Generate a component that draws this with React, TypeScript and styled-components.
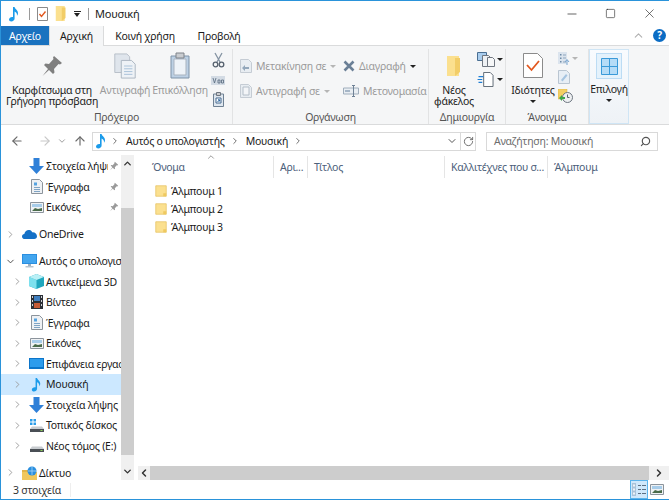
import React from 'react'
import styled, { createGlobalStyle } from 'styled-components'
import { ArrowLeft, ArrowRight, ArrowUp, ChevronDown, ChevronLeft, ChevronRight, ChevronUp, RotateCw, Search, Minus, Square, X } from 'lucide-react'

const GlobalStyle = createGlobalStyle`
    html, body {
        margin: 0;
        padding: 0;
        background: #ffffff;
    }
    * {
        box-sizing: border-box;
    }
`

const NoteIcon = ({ size = 16 }: { size?: number }) => (
    <svg width={size} height={size} viewBox="0 0 16 16">
        <path d="M7 1h1.6c.3 2.2 3.6 3 3.4 6.4-.1 1-.5 1.800-1 2.400.2-2-.8-3.600-2.400-4.200V12.600c0 1.700-1.600 2.900-3.300 2.900-1.300 0-2.300-.7-2.300-1.900 0-1.500 1.500-2.700 3.100-2.700.3 0 .6 0 .9.100z" fill="#1b9bea" />
    </svg>
)

const FolderIcon = ({ size = 12, tall = false }: { size?: number; tall?: boolean }) => (
    <svg width={size} height={tall ? size * 1.25 : size} viewBox={tall ? '0 0 16 20' : '0 0 16 16'}>
        {tall ? (
            <>
                <path d="M1 0h12v20H1z" fill="#fbe08f" />
                <path d="M9 2h5v14l-5 4z" fill="#f2cd68" />
            </>
        ) : (
            <>
                <path d="M1 1h14v14H1z" fill="#fbe08f" />
                <path d="M1 1h14v14H1z" fill="none" stroke="#e6c263" />
                <path d="M11 11h4v4h-4z" fill="#efc95f" />
            </>
        )}
    </svg>
)

const ChecklistIcon = () => (
    <svg width="11" height="14" viewBox="0 0 11 14">
        <path d="M.5.500h10v13H.5z" fill="#fff" stroke="#8a8a8a" />
        <path d="M2.500 7l2 2.500 4-5" fill="none" stroke="#e2571e" strokeWidth="1.400" />
    </svg>
)

const PinIcon = ({ size = 24, color = '#7f7f7f' }: { size?: number; color?: string }) => (
    <svg width={size} height={size} viewBox="0 0 24 24">
        <path d="M14 2l8 7-2 1.500-1.500-.5-4.500 5 .5 3.500-1.500 1.500-4-4-6.500 6 5.500-7-4-4 1.500-1.500 3.500.5 4.500-5-.5-1.500z" fill={color} />
    </svg>
)

const CopyIcon = () => (
    <svg width="24" height="26" viewBox="0 0 24 28">
        <path d="M1 1h13l3 3v17H1z" fill="#dfe5ec" stroke="#b5bdc7" />
        <path d="M8 8h11l4 4v15H8z" fill="#eef2f6" stroke="#a9b3bf" />
        <path d="M11 14h9M11 17h9M11 20h9M11 23h9" stroke="#a6c0d8" />
    </svg>
)

const PasteIcon = () => (
    <svg width="20" height="27" viewBox="0 0 20 27">
        <path d="M1 4h18v22H1z" fill="#bcd0e4" stroke="#7f93a8" />
        <path d="M4 7h12v16H4z" fill="#eef3f8" stroke="#a9b3bf" />
        <path d="M6 1h8v5H6z" fill="#c9ccd0" stroke="#7f8389" />
    </svg>
)

const ScissorsIcon = () => (
    <svg width="13" height="16" viewBox="0 0 13 16">
        <path d="M3 1l5 9M10 1l-5 9" stroke="#8493a3" strokeWidth="1.300" fill="none" />
        <circle cx="3.500" cy="12.500" r="2.300" fill="none" stroke="#56616e" strokeWidth="1.300" />
        <circle cx="9.500" cy="12.500" r="2.300" fill="none" stroke="#56616e" strokeWidth="1.300" />
    </svg>
)

const PathIcon = () => (
    <svg width="14" height="9" viewBox="0 0 14 9">
        <path d="M0 0h14v9H0z" fill="#d3dbe4" />
        <path d="M2 2l1.500 5L5 2M7 4h2v3H7zM10.500 4h2v3h-2z" fill="none" stroke="#55687c" strokeWidth=".8" />
    </svg>
)

const ShortcutIcon = () => (
    <svg width="11" height="15" viewBox="0 0 11 15">
        <path d="M.5 2h10v12.500H.5z" fill="#dfe7ef" stroke="#6f8193" />
        <path d="M3.500 .5h4v3h-4z" fill="#c9ccd0" stroke="#6f7680" />
        <path d="M3 6h5v5H3z" fill="#fff" stroke="#44698f" />
        <path d="M4.500 10l2-2M5 7.800h1.700v1.700" stroke="#1f5d99" fill="none" />
    </svg>
)

const MoveIcon = ({ copy = false }: { copy?: boolean }) => (
    <svg width="12" height="14" viewBox="0 0 12 14">
        <path d="M.5.500h8l3 3v10H.5z" fill="#e8edf2" stroke="#c5ccd4" />
        {copy ? (
            <path d="M3 3h6v8H3z" fill="#f3f5f8" stroke="#b4bec8" />
        ) : (
            <path d="M9 8H5V6L2 9l3 3v-2h4z" fill="#93a7bb" />
        )}
    </svg>
)

const DeleteIcon = () => (
    <svg width="12" height="12" viewBox="0 0 12 12">
        <path d="M1.500 1.500l9 9M10.500 1.500l-9 9" stroke="#6a7f96" strokeWidth="2.600" />
    </svg>
)

const RenameIcon = () => (
    <svg width="16" height="12" viewBox="0 0 16 12">
        <path d="M.5 3h15v6H.5z" fill="#e9eef3" stroke="#a0aebc" />
        <path d="M9 .5h3M10.500 .5v11M9 11.500h3" stroke="#6f8296" fill="none" />
        <path d="M2 6h5" stroke="#8fa3b8" strokeWidth="1.500" />
    </svg>
)

const MoveToNewIcon = () => (
    <svg width="18" height="15" viewBox="0 0 18 15">
        <path d="M.5.500h9v8h-9z" fill="#a9cdee" stroke="#4a6f93" />
        <path d="M5.500 3.500h6l2 2v9h-8z" fill="#eef1f4" stroke="#6f7680" />
        <path d="M10.500 5.500h5l2 2v7h-7z" fill="#f6f7f8" stroke="#6f7680" />
    </svg>
)

const NewDocIcon = () => (
    <svg width="18" height="15" viewBox="0 0 18 16">
        <path d="M6.500.5h7l3 3v12h-10z" fill="#fff" stroke="#5a6470" />
        <path d="M1 5h5M0 8h5M1 11h4" stroke="#1f7fd6" strokeWidth="1.300" />
    </svg>
)

const PropertiesIcon = () => (
    <svg width="20" height="25" viewBox="0 0 20 25">
        <path d="M.5.500h14l5 5v19H.5z" fill="#fff" stroke="#8b8b8b" />
        <path d="M4 12l4.500 5L16 8" fill="none" stroke="#e2571e" strokeWidth="1.800" />
    </svg>
)

const ListUpIcon = () => (
    <svg width="12" height="13" viewBox="0 0 12 13">
        <path d="M0 0h9v12H0z" fill="#dbe4ee" />
        <path d="M2 2h1.500v1.500H2zM2 5.500h1.500V7H2zM2 9h1.500v1.500H2z" fill="#6f8ba8" />
        <path d="M5 3h3M5 6h3M5 10h3" stroke="#8ea5bc" />
        <path d="M9 13V8M7 10l2-2.500L11 10" stroke="#7aa6d0" fill="none" />
    </svg>
)

const EditDocIcon = () => (
    <svg width="12" height="14" viewBox="0 0 12 14">
        <path d="M.5.500h8l3 3v10H.5z" fill="#e7eef5" stroke="#b9c5d1" />
        <path d="M3 10l5-6 1.500 1.500-5 6z" fill="#a5c4e0" />
    </svg>
)

const HistoryIcon = () => (
    <svg width="15" height="14" viewBox="0 0 15 14">
        <path d="M0 0h9v10H0z" fill="#f3cf63" stroke="#d5ad45" strokeWidth=".5" />
        <circle cx="9.500" cy="8.500" r="5" fill="#eef0f2" stroke="#6d7680" />
        <path d="M9.500 5.500v3h2" stroke="#59636d" fill="none" />
        <path d="M1 9l3-3v2h3v2H4v2z" fill="#3ea84a" />
    </svg>
)

const SelectIcon = () => (
    <svg width="17" height="17" viewBox="0 0 17 17">
        <path d="M.5.500h16v16H.5z" fill="#b5dcf7" stroke="#3a9ad9" />
        <path d="M8.500 .5v16M.5 8.500h16" stroke="#3a9ad9" />
    </svg>
)

const DownloadIcon = () => (
    <svg width="15" height="16" viewBox="0 0 15 16">
        <path d="M4.500 0h6v8h4.500l-7.500 8L0 8h4.500z" fill="#2f80d8" />
    </svg>
)

const DocIcon = () => (
    <svg width="12" height="15" viewBox="0 0 12 15">
        <path d="M.5.500h8l3 3v11H.5z" fill="#eef1f4" stroke="#8c949c" />
        <path d="M3 3.500h3v3H3z" fill="#55a3e0" />
        <path d="M3 8.500h6M3 10.500h6M3 12.500h6" stroke="#7fa4c4" />
    </svg>
)

const PictureIcon = () => (
    <svg width="14" height="11" viewBox="0 0 14 11">
        <path d="M.5.500h13v10H.5z" fill="#f0f2f4" stroke="#8c949c" />
        <path d="M2 2h10v3H2z" fill="#a8cdea" />
        <path d="M2 9l3-3 3 1 4-1v3z" fill="#4a6b4a" />
    </svg>
)

const CloudIcon = () => (
    <svg width="15" height="10" viewBox="0 0 15 10">
        <path d="M3 10C1 10 0 8.800 0 7.400 0 6 1 5 2.300 4.900 3 2 5.300.5 7.500 1c1.300.3 2.300 1.100 2.700 2.300 2.500-.4 4.800 1.400 4.800 3.900 0 1.700-1.200 2.800-2.800 2.800z" fill="#1571c7" />
    </svg>
)

const ComputerIcon = () => (
    <svg width="15" height="14" viewBox="0 0 15 14">
        <path d="M0 0h15v10H0z" fill="#2b8fe0" />
        <path d="M1 1h13v8H1z" fill="#43a6ef" />
        <path d="M6 10h3v2H6z" fill="#9fb0bf" />
        <path d="M3.500 12h8v1.500h-8z" fill="#b8c4ce" />
    </svg>
)

const CubeIcon = () => (
    <svg width="15" height="15" viewBox="0 0 15 15">
        <path d="M7.500 0L15 3v9l-7.500 3L0 12V3z" fill="#1ea6bd" />
        <path d="M0 3l7.500 3v9L0 12z" fill="#7ce0ee" />
        <path d="M7.500 0L15 3 7.500 6 0 3z" fill="#baf0f6" />
    </svg>
)

const FilmIcon = () => (
    <svg width="12" height="14" viewBox="0 0 12 14">
        <path d="M0 0h12v14H0z" fill="#2b2f36" />
        <path d="M3 1h6v5H3z" fill="#3f7fc0" />
        <path d="M3 8h6v5H3z" fill="#c45a35" />
        <path d="M1 1h1v2H1zM1 5h1v2H1zM1 9h1v2H1zM10 1h1v2h-1zM10 5h1v2h-1zM10 9h1v2h-1z" fill="#cfd3d8" />
    </svg>
)

const DesktopIcon = () => (
    <svg width="15" height="11" viewBox="0 0 15 11">
        <path d="M0 0h15v11H0z" fill="#0c75c9" />
        <path d="M1 1h13v8H1z" fill="#2d9cec" />
    </svg>
)

const DriveIcon = ({ windows = false }: { windows?: boolean }) => (
    <svg width="14" height="13" viewBox="0 0 14 13">
        {windows && <path d="M0 0h2.500v2.500H0zM3.500 0H6v2.500H3.500zM0 3.500h2.500V6H0zM3.500 3.500H6V6H3.500z" fill="#2a9ce8" />}
        <path d="M2 7.500h10l2 2.500H0z" fill="#c8ccd0" />
        <path d="M0 10h14v3H0z" fill="#4a4f55" />
        <path d="M10.500 11h2v1h-2z" fill="#8ed05a" />
    </svg>
)

const NetworkIcon = () => (
    <svg width="15" height="14" viewBox="0 0 15 14">
        <path d="M0 6h15v8H0z" fill="#f0c75c" />
        <path d="M0 4h6l1 2H0z" fill="#e2b448" />
        <circle cx="10" cy="5" r="4.500" fill="#2a8fdf" />
        <path d="M6 5h8M10 1v8" stroke="#a7d6f7" strokeWidth=".8" />
    </svg>
)

const DetailsViewIcon = () => (
    <svg width="14" height="13" viewBox="0 0 14 13">
        <path d="M0 0h4v13H0z" fill="#a9c2d8" />
        <path d="M1 1.500h2v2H1zM1 5.500h2v2H1zM1 9.500h2v2H1z" fill="#eef3f7" />
        <path d="M6 2.500h3M10 2.500h4M6 6.500h3M10 6.500h4M6 10.500h3M10 10.500h4" stroke="#5c6f82" />
    </svg>
)

function Caret() {
    return <CaretMark />
}

const rootTree = [
    { label: 'Στοιχεία λήψης', icon: <DownloadIcon />, pinned: true },
    { label: 'Έγγραφα', icon: <DocIcon />, pinned: true },
    { label: 'Εικόνες', icon: <PictureIcon />, pinned: true }
]

const computerTree = [
    { label: 'Αντικείμενα 3D', icon: <CubeIcon /> },
    { label: 'Βίντεο', icon: <FilmIcon /> },
    { label: 'Έγγραφα', icon: <DocIcon /> },
    { label: 'Εικόνες', icon: <PictureIcon /> },
    { label: 'Επιφάνεια εργασίας', icon: <DesktopIcon /> },
    { label: 'Μουσική', icon: <NoteIcon size={15} />, selected: true },
    { label: 'Στοιχεία λήψης', icon: <DownloadIcon /> },
    { label: 'Τοπικός δίσκος', icon: <DriveIcon windows /> },
    { label: 'Νέος τόμος (E:)', icon: <DriveIcon /> }
]

const columns = [
    { label: 'Όνομα', width: 136, pad: 14 },
    { label: 'Αρι...', width: 34, pad: 6 },
    { label: 'Τίτλος', width: 137, pad: 6 },
    { label: 'Καλλιτέχνες που σ...', width: 103, pad: 6 },
    { label: 'Άλμπουμ', width: 100, pad: 6 }
]

function App() {
    return (
        <Root>
            <GlobalStyle />
            <TitleBar>
                <TitleIcons>
                    <NoteIcon />
                    <TitleSep />
                    <ChecklistIcon />
                    <FolderIcon size={12} tall />
                    <QuickCaret />
                    <TitleSep />
                </TitleIcons>
                <TitleText>Μουσική</TitleText>
                <WindowButtons>
                    <WindowButton><Minus size={14} strokeWidth={1.2} /></WindowButton>
                    <WindowButton><Square size={11} strokeWidth={1.3} /></WindowButton>
                    <WindowButton><X size={15} strokeWidth={1} /></WindowButton>
                </WindowButtons>
            </TitleBar>

            <TabStrip>
                <FileTab>Αρχείο</FileTab>
                <ActiveTab>Αρχική</ActiveTab>
                <Tab width={82}>Κοινή χρήση</Tab>
                <Tab width={66}>Προβολή</Tab>
                <TabTools>
                    <ChevronUp size={13} color="#b0b0b0" />
                    <HelpBadge>?</HelpBadge>
                </TabTools>
            </TabStrip>

            <Ribbon>
                <Group width={232}>
                    <GroupBody>
                        <LargeButton width={98}>
                            <LargeIcon><PinIcon /></LargeIcon>
                            Καρφίτσωμα στη Γρήγορη πρόσβαση
                        </LargeButton>
                        <LargeButton width={48} disabled>
                            <LargeIcon><CopyIcon /></LargeIcon>
                            Αντιγραφή
                        </LargeButton>
                        <LargeButton width={62} disabled>
                            <LargeIcon><PasteIcon /></LargeIcon>
                            Επικόλληση
                        </LargeButton>
                        <IconColumn width={14} gap={7.5} centered>
                            <ScissorsIcon />
                            <PathIcon />
                            <ShortcutIcon />
                        </IconColumn>
                    </GroupBody>
                    <GroupLabel>Πρόχειρο</GroupLabel>
                </Group>
                <Group width={196}>
                    <GroupBody>
                        <SmallColumn width={103} inset={7}>
                            <SmallButton><MoveIcon /> Μετακίνηση σε <Caret /></SmallButton>
                            <SmallButton><MoveIcon copy /> Αντιγραφή σε <Caret /></SmallButton>
                        </SmallColumn>
                        <SmallColumn width={90} inset={7}>
                            <SmallButton><DeleteIcon /> Διαγραφή <DarkCaret /></SmallButton>
                            <SmallButton><RenameIcon /> Μετονομασία</SmallButton>
                        </SmallColumn>
                    </GroupBody>
                    <GroupLabel>Οργάνωση</GroupLabel>
                </Group>
                <Group width={77}>
                    <GroupBody>
                        <LargeButton width={46}>
                            <LargeIcon><FolderIcon size={16} tall /></LargeIcon>
                            Νέος φάκελος
                        </LargeButton>
                        <IconColumn width={26} gap={5}>
                            <IconWithCaret><MoveToNewIcon /><DarkCaret /></IconWithCaret>
                            <IconWithCaret><NewDocIcon /><DarkCaret /></IconWithCaret>
                        </IconColumn>
                    </GroupBody>
                    <GroupLabel>Δημιουργία</GroupLabel>
                </Group>
                <Group width={83}>
                    <GroupBody>
                        <LargeButton width={50}>
                            <LargeIcon><PropertiesIcon /></LargeIcon>
                            Ιδιότητες
                            <BlockCaret />
                        </LargeButton>
                        <IconColumn width={26} gap={5}>
                            <IconWithCaret><ListUpIcon /><Caret /></IconWithCaret>
                            <EditDocIcon />
                            <HistoryIcon />
                        </IconColumn>
                    </GroupBody>
                    <GroupLabel>Άνοιγμα</GroupLabel>
                </Group>
                <SelectGroup>
                    <SelectTile><SelectIcon /></SelectTile>
                    Επιλογή
                    <BlockCaret />
                </SelectGroup>
            </Ribbon>

            <NavBar>
                <NavArrows>
                    <NavSlot><ArrowLeft size={14} color="#6b6b6b" /></NavSlot>
                    <NavSlot lead={14}><ArrowRight size={14} color="#c8c8c8" /></NavSlot>
                    <NavSlot lead={5}><ChevronDown size={10} color="#8a8a8a" /></NavSlot>
                    <NavSlot lead={6}><ArrowUp size={14} color="#6b6b6b" /></NavSlot>
                </NavArrows>
                <AddressBox>
                    <NoteIcon />
                    <Crumb lead={1}><ChevronRight size={10} /></Crumb>
                    <CrumbText>Αυτός ο υπολογιστής</CrumbText>
                    <Crumb lead={5}><ChevronRight size={10} /></Crumb>
                    <CrumbText>Μουσική</CrumbText>
                    <Crumb lead={5}><ChevronRight size={10} /></Crumb>
                    <AddressTools>
                        <ChevronDown size={12} color="#555" />
                        <AddressDivider />
                        <RotateCw size={11} color="#666" />
                    </AddressTools>
                </AddressBox>
                <SearchBox>
                    Αναζήτηση: Μουσική
                    <SearchIconBox><Search size={11} color="#555" strokeWidth={2.5} /></SearchIconBox>
                </SearchBox>
            </NavBar>

            <Body>
                <Sidebar>
                    <TreeList>
                        {rootTree.map((item) => (
                            <TreeRow key={item.label} depth={2}>
                                <Expander />
                                <TreeIcon>{item.icon}</TreeIcon>
                                <TreeLabel>{item.label}</TreeLabel>
                                <PinSlot><PinIcon size={10} color="#9a9a9a" /></PinSlot>
                            </TreeRow>
                        ))}
                        <TreeRow depth={1} spaced>
                            <Expander><ChevronRight size={11} /></Expander>
                            <TreeIcon><CloudIcon /></TreeIcon>
                            <TreeLabel>OneDrive</TreeLabel>
                        </TreeRow>
                        <TreeRow depth={1} spaced>
                            <Expander><ChevronDown size={11} color="#444" /></Expander>
                            <TreeIcon><ComputerIcon /></TreeIcon>
                            <TreeLabel>Αυτός ο υπολογιστής</TreeLabel>
                        </TreeRow>
                        {computerTree.map((item) => (
                            <TreeRow key={item.label} depth={2} selected={item.selected}>
                                <Expander><ChevronRight size={11} /></Expander>
                                <TreeIcon>{item.icon}</TreeIcon>
                                <TreeLabel>{item.label}</TreeLabel>
                            </TreeRow>
                        ))}
                        <TreeRow depth={1} spaced>
                            <Expander><ChevronRight size={11} /></Expander>
                            <TreeIcon><NetworkIcon /></TreeIcon>
                            <TreeLabel>Δίκτυο</TreeLabel>
                        </TreeRow>
                    </TreeList>
                    <VScroll>
                        <ScrollButton><ChevronUp size={11} strokeWidth={3} color="#333" /></ScrollButton>
                        <VTrack>
                            <VThumb />
                        </VTrack>
                        <ScrollButton><ChevronDown size={11} strokeWidth={3} color="#333" /></ScrollButton>
                    </VScroll>
                </Sidebar>
                <Main>
                    <HeaderRow>
                        <SortMark><ChevronUp size={10} color="#888" /></SortMark>
                        {columns.map((col) => (
                            <HeaderCell key={col.label} width={col.width} pad={col.pad}>{col.label}</HeaderCell>
                        ))}
                    </HeaderRow>
                    <FileList>
                        {['Άλμπουμ 1', 'Άλμπουμ 2', 'Άλμπουμ 3'].map((name) => (
                            <FileRow key={name}>
                                <FolderIcon size={12} />
                                {name}
                            </FileRow>
                        ))}
                    </FileList>
                    <HScroll>
                        <ScrollEnd width={12}><ChevronLeft size={12} strokeWidth={3} color="#333" /></ScrollEnd>
                        <HThumb />
                        <ScrollEnd width={20}><ChevronRight size={12} strokeWidth={3} color="#333" /></ScrollEnd>
                    </HScroll>
                </Main>
            </Body>

            <StatusBar>
                <StatusText>3 στοιχεία</StatusText>
                <ViewButtons>
                    <ViewButton active><DetailsViewIcon /></ViewButton>
                    <ViewButton><PictureIcon /></ViewButton>
                </ViewButtons>
            </StatusBar>
        </Root>
    )
}

const Root = styled.div`
    width: 669px;
    height: 500px;
    display: flex;
    flex-direction: column;
    overflow: hidden;
    background: #ffffff;
    border-top: 1px solid #2a93da;
    border-left: 1px solid #2a93da;
    border-bottom: 1px solid #2a93da;
    font-family: 'Noto Sans', 'Open Sans', sans-serif;
    font-size: 10.5px;
    letter-spacing: -0.25px;
    color: #1a1a1a;
`

const TitleBar = styled.div`
    height: 25px;
    display: flex;
    align-items: center;
    flex-shrink: 0;
`

const TitleIcons = styled.div`
    display: flex;
    align-items: center;
    gap: 7px;
    padding-left: 5px;
`

const TitleSep = styled.div`
    width: 1px;
    height: 12px;
    background: #9a9a9a;
`

const QuickCaret = styled.div`
    width: 7px;
    height: 6px;
    border-top: 1px solid #222;
    &::after {
        content: '';
        display: block;
        margin-top: 1px;
        width: 0;
        height: 0;
        border-left: 3.5px solid transparent;
        border-right: 3.5px solid transparent;
        border-top: 4px solid #222;
    }
`

const TitleText = styled.div`
    margin-left: 6px;
    font-size: 11px;
`

const WindowButtons = styled.div`
    margin-left: auto;
    display: flex;
    color: #222;
`

const WindowButton = styled.div`
    width: 39px;
    height: 25px;
    display: flex;
    align-items: center;
    justify-content: center;
`

const TabStrip = styled.div`
    height: 20px;
    display: flex;
    align-items: stretch;
    flex-shrink: 0;
    border-bottom: 1px solid #dadbdc;
`

const FileTab = styled.div`
    width: 48px;
    display: flex;
    align-items: center;
    justify-content: center;
    background: #1a72bf;
    color: #ffffff;
`

const ActiveTab = styled.div`
    width: 55px;
    height: 20px;
    display: flex;
    align-items: center;
    justify-content: center;
    background: #f5f6f7;
    border-left: 1px solid #dadbdc;
    border-right: 1px solid #dadbdc;
`

const Tab = styled.div<{ width: number }>`
    width: ${(props) => props.width}px;
    display: flex;
    align-items: center;
    justify-content: center;
`

const TabTools = styled.div`
    margin-left: auto;
    display: flex;
    align-items: center;
    gap: 8px;
    padding-right: 3px;
`

const HelpBadge = styled.div`
    width: 13px;
    height: 13px;
    border-radius: 50%;
    background: #0b6cc4;
    color: #ffffff;
    font-weight: 700;
    font-size: 10px;
    line-height: 13px;
    text-align: center;
`

const Ribbon = styled.div`
    height: 79px;
    display: flex;
    flex-shrink: 0;
    background: #f5f6f7;
    border-bottom: 1px solid #dadbdc;
`

const Group = styled.div<{ width: number }>`
    width: ${(props) => props.width}px;
    display: flex;
    flex-direction: column;
    border-right: 1px solid #e2e3e4;
    margin-top: 3px;
`

const GroupBody = styled.div`
    flex: 1;
    display: flex;
    min-height: 0;
    padding-left: 2px;
`

const GroupLabel = styled.div`
    height: 14px;
    line-height: 14px;
    text-align: center;
    color: #555555;
`

const LargeButton = styled.div<{ width: number; disabled?: boolean }>`
    width: ${(props) => props.width}px;
    display: flex;
    flex-direction: column;
    align-items: center;
    text-align: center;
    line-height: 11px;
    flex-shrink: 0;
    color: ${(props) => (props.disabled ? '#9b9b9b' : '#222222')};
`

const LargeIcon = styled.div`
    height: 33px;
    display: flex;
    align-items: center;
    justify-content: center;
    margin-bottom: 3px;
`

const IconColumn = styled.div<{ width: number; gap: number; centered?: boolean }>`
    width: ${(props) => props.width}px;
    display: flex;
    flex-direction: column;
    align-items: ${(props) => (props.centered ? 'center' : 'flex-start')};
    gap: ${(props) => props.gap}px;
    padding-top: 3px;
    flex-shrink: 0;
`

const IconWithCaret = styled.div`
    display: flex;
    align-items: center;
    gap: 2px;
`

const SmallColumn = styled.div<{ width: number; inset: number }>`
    width: ${(props) => props.width}px;
    display: flex;
    flex-direction: column;
    gap: 7px;
    padding: 8px 0 0 ${(props) => props.inset - 2}px;
`

const SmallButton = styled.div`
    display: flex;
    align-items: center;
    gap: 4px;
    height: 18px;
    color: #9b9b9b;
    white-space: nowrap;
`

const CaretMark = styled.span`
    display: inline-block;
    width: 0;
    height: 0;
    border-left: 3px solid transparent;
    border-right: 3px solid transparent;
    border-top: 3px solid #b5b5b5;
`

const DarkCaret = styled(CaretMark)`
    border-top-color: #222222;
`

const BlockCaret = styled(DarkCaret)`
    display: block;
    margin-top: 4px;
`

const SelectGroup = styled.div`
    width: 40px;
    margin: 3px 0 0 0;
    display: flex;
    flex-direction: column;
    align-items: center;
    border: 1px solid #cfe5f5;
    background: linear-gradient(#f8fbfe, #eef2f6);
    color: #222222;
    line-height: 11px;
    padding-top: 3px;
`

const SelectTile = styled.div`
    width: 26px;
    height: 26px;
    display: flex;
    align-items: center;
    justify-content: center;
    background: #e4f2fc;
    border: 1px solid #bcdcf4;
    margin-bottom: 5px;
`

const NavBar = styled.div`
    height: 30px;
    flex-shrink: 0;
    display: flex;
    align-items: center;
    padding: 2px 10px 0 9px;
`

const NavArrows = styled.div`
    width: 82px;
    display: flex;
    align-items: center;
`

const NavSlot = styled.span<{ lead?: number }>`
    display: flex;
    margin-left: ${(props) => props.lead || 0}px;
`

const AddressBox = styled.div`
    width: 384px;
    height: 19px;
    display: flex;
    align-items: center;
    border: 1px solid #d9d9d9;
    background: #ffffff;
`

const Crumb = styled.span<{ lead: number }>`
    display: flex;
    margin: 0 6px 0 ${(props) => props.lead}px;
    color: #555555;
`

const CrumbText = styled.span`
    white-space: nowrap;
`

const AddressTools = styled.div`
    margin-left: auto;
    display: flex;
    align-items: center;
    gap: 2px;
    padding-right: 1px;
    height: 100%;
`

const AddressDivider = styled.div`
    width: 1px;
    height: 100%;
    background: #d9d9d9;
`

const SearchBox = styled.div`
    width: 172px;
    height: 19px;
    margin-left: 10px;
    display: flex;
    align-items: center;
    padding: 0 6px 0 7px;
    border: 1px solid #d9d9d9;
    color: #6d6d6d;
`

const SearchIconBox = styled.span`
    margin-left: auto;
    display: flex;
    transform: scaleX(-1);
`

const Body = styled.div`
    flex: 1;
    display: flex;
    min-height: 0;
`

const Sidebar = styled.div`
    width: 133px;
    display: flex;
    flex-shrink: 0;
`

const TreeList = styled.div`
    width: 120px;
    padding-top: 1px;
    overflow: hidden;
    flex-shrink: 0;
`

const TreeRow = styled.div<{ depth: number; selected?: boolean; spaced?: boolean }>`
    position: relative;
    height: 20.5px;
    display: flex;
    align-items: center;
    padding-left: ${(props) => (props.depth === 2 ? 11 : 4)}px;
    margin-top: ${(props) => (props.spaced ? 6.5 : 0)}px;
    background: ${(props) => (props.selected ? '#cce8ff' : 'transparent')};
    white-space: nowrap;
`

const Expander = styled.span`
    width: 12px;
    display: flex;
    color: #999999;
    flex-shrink: 0;
`

const TreeIcon = styled.span`
    width: 19px;
    margin-left: 3px;
    display: flex;
    align-items: center;
    justify-content: center;
    flex-shrink: 0;
`

const TreeLabel = styled.span`
    white-space: nowrap;
`

const PinSlot = styled.span`
    position: absolute;
    right: 0;
    top: 0;
    height: 100%;
    padding: 0 2px 0 1px;
    display: flex;
    align-items: center;
    background: #ffffff;
`

const VScroll = styled.div`
    width: 13px;
    display: flex;
    flex-direction: column;
    background: #f0f0f0;
`

const ScrollButton = styled.div`
    height: 17px;
    display: flex;
    align-items: center;
    justify-content: center;
`

const VTrack = styled.div`
    flex: 1;
    padding-top: 36px;
`

const VThumb = styled.div`
    height: 247px;
    background: #cdcdcd;
`

const Main = styled.div`
    flex: 1;
    display: flex;
    flex-direction: column;
    min-width: 0;
    padding-left: 4px;
`

const HeaderRow = styled.div`
    position: relative;
    height: 23px;
    padding-top: 1px;
    display: flex;
    flex-shrink: 0;
`

const SortMark = styled.span`
    position: absolute;
    left: 68px;
    top: -3px;
    display: flex;
`

const HeaderCell = styled.div<{ width: number; pad: number }>`
    width: ${(props) => props.width}px;
    padding-left: ${(props) => props.pad}px;
    display: flex;
    align-items: center;
    color: #4c607a;
    white-space: nowrap;
    overflow: hidden;
    border-right: 1px solid #e5e5e5;
    &:last-child {
        border-right: none;
    }
`

const FileList = styled.div`
    flex: 1;
    padding: 4px 0 0 17px;
`

const FileRow = styled.div`
    height: 18px;
    display: flex;
    align-items: center;
    gap: 4px;
`

const HScroll = styled.div`
    height: 14px;
    display: flex;
    flex-shrink: 0;
    background: #f0f0f0;
`

const ScrollEnd = styled.div<{ width: number }>`
    width: ${(props) => props.width}px;
    display: flex;
    align-items: center;
    justify-content: center;
    flex-shrink: 0;
`

const HThumb = styled.div`
    flex: 1;
    background: #cdcdcd;
`

const StatusBar = styled.div`
    height: 19px;
    display: flex;
    align-items: center;
    padding: 0 3px 0 12px;
    flex-shrink: 0;
`

const StatusText = styled.div`
    padding-right: 9px;
    border-right: 1px solid #eeeeee;
    color: #333333;
`

const ViewButtons = styled.div`
    margin-left: auto;
    display: flex;
    align-items: center;
`

const ViewButton = styled.div<{ active?: boolean }>`
    width: 18px;
    height: 19px;
    display: flex;
    align-items: center;
    justify-content: center;
    background: ${(props) => (props.active ? '#cfe8fb' : 'transparent')};
    border: 1px solid ${(props) => (props.active ? '#5bb4ec' : 'transparent')};
`

export default App
